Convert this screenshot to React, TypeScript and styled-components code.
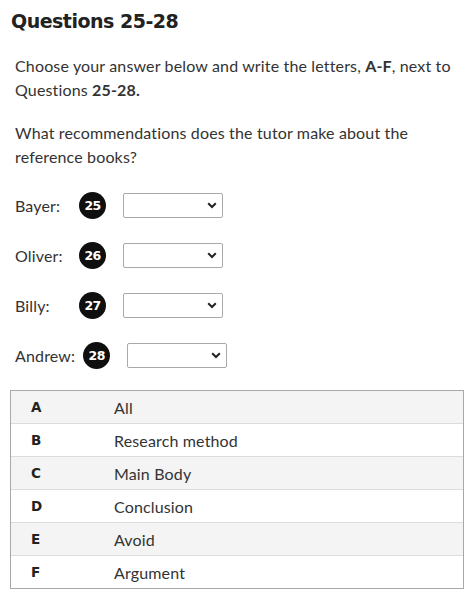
import React from 'react'
import styled, { createGlobalStyle } from 'styled-components'

const GlobalStyle = createGlobalStyle`
  body {
    margin: 0;
    background: #ffffff;
    color: #333333;
    font-family: 'Lato', 'Noto Sans', sans-serif;
  }
`

const Page = styled.div`
  padding: 7px 7px 20px 10px;
`

const Title = styled.h2`
  margin: 0 0 19px 1px;
  font-family: 'DejaVu Sans', sans-serif;
  font-size: 19px;
  font-weight: 700;
  line-height: 28px;
  color: #222222;
  letter-spacing: -0.5px;
`

const Body = styled.div`
  padding: 0 5px;
`

const Paragraph = styled.p`
  margin: 0 0 19px;
  font-size: 16px;
  letter-spacing: 0.15px;
  line-height: 24px;
`

const Strong = styled.strong`
  font-weight: 700;
`

const AnswerList = styled.div`
  display: flex;
  flex-direction: column;
  gap: 25px;
  margin-top: 24px;
`

const AnswerRow = styled.div`
  display: flex;
  align-items: center;
  height: 25px;
`

const Name = styled.span`
  min-width: 56px;
  margin-right: 8px;
  font-size: 16px;
  letter-spacing: 0.15px;
`

const Badge = styled.span`
  display: inline-flex;
  align-items: center;
  justify-content: center;
  width: 27px;
  height: 27px;
  border-radius: 50%;
  background: #0f0f0f;
  color: #ffffff;
  font-family: 'DejaVu Sans', sans-serif;
  font-size: 12.5px;
  font-weight: 700;
  letter-spacing: -0.6px;
  margin-right: 17px;
`

const SelectWrap = styled.div`
  position: relative;
  width: 100px;
  height: 25px;
`

const Select = styled.select`
  appearance: none;
  width: 100%;
  height: 100%;
  border: 1px solid #a9a9a9;
  border-radius: 2px;
  background: #ffffff;
  font-family: inherit;
  font-size: 14px;
`

const Chevron = styled.svg`
  position: absolute;
  right: 6px;
  top: 9px;
  pointer-events: none;
`

const OptionsTable = styled.div`
  margin-top: 22px;
  border: 1px solid #a8a8a8;
`

const OptionRow = styled.div<{ $shaded: boolean }>`
  display: flex;
  align-items: center;
  height: 32px;
  background: ${({ $shaded }) => ($shaded ? '#f4f4f4' : '#ffffff')};
  border-top: 1px solid #dcdcdc;

  &:first-child {
    border-top: none;
  }
`

const Letter = styled.span`
  width: 83px;
  padding-left: 20px;
  font-family: 'DejaVu Sans', sans-serif;
  font-size: 13.5px;
  font-weight: 700;
  color: #222222;
`

const OptionText = styled.span`
  font-size: 16px;
  letter-spacing: 0.15px;
  color: #333333;
`

const speakers = [
  { name: 'Bayer:', num: 25 },
  { name: 'Oliver:', num: 26 },
  { name: 'Billy:', num: 27 },
  { name: 'Andrew:', num: 28 },
]

const options = [
  ['A', 'All'],
  ['B', 'Research method'],
  ['C', 'Main Body'],
  ['D', 'Conclusion'],
  ['E', 'Avoid'],
  ['F', 'Argument'],
]

const App = () => (
  <>
    <GlobalStyle />
    <Page>
      <Title>Questions 25-28</Title>
      <Body>
        <Paragraph>
          <span>Choose your answer below and write the letters, </span>
          <Strong>A-F</Strong>
          <span>, next to </span>
          <span>Questions </span>
          <Strong>25-28.</Strong>
        </Paragraph>
        <Paragraph>
          <span>What recommendations does the tutor make about the </span>
          <span>reference books?</span>
        </Paragraph>
        <AnswerList>
          {speakers.map((s) => (
            <AnswerRow key={s.num}>
              <Name>{s.name}</Name>
              <Badge>{s.num}</Badge>
              <SelectWrap>
                <Select defaultValue="">
                  <option value="" />
                  {options.map(([l]) => (
                    <option key={l} value={l}>
                      {l}
                    </option>
                  ))}
                </Select>
                <Chevron width="10" height="7" viewBox="0 0 10 7">
                  <path d="M1.2 1.2 L5 5 L8.8 1.2" fill="none" stroke="#222" strokeWidth="2" />
                </Chevron>
              </SelectWrap>
            </AnswerRow>
          ))}
        </AnswerList>
      </Body>
      <OptionsTable>
        {options.map(([l, t], i) => (
          <OptionRow key={l} $shaded={i % 2 === 0}>
            <Letter>{l}</Letter>
            <OptionText>{t}</OptionText>
          </OptionRow>
        ))}
      </OptionsTable>
    </Page>
  </>
)

export default App
